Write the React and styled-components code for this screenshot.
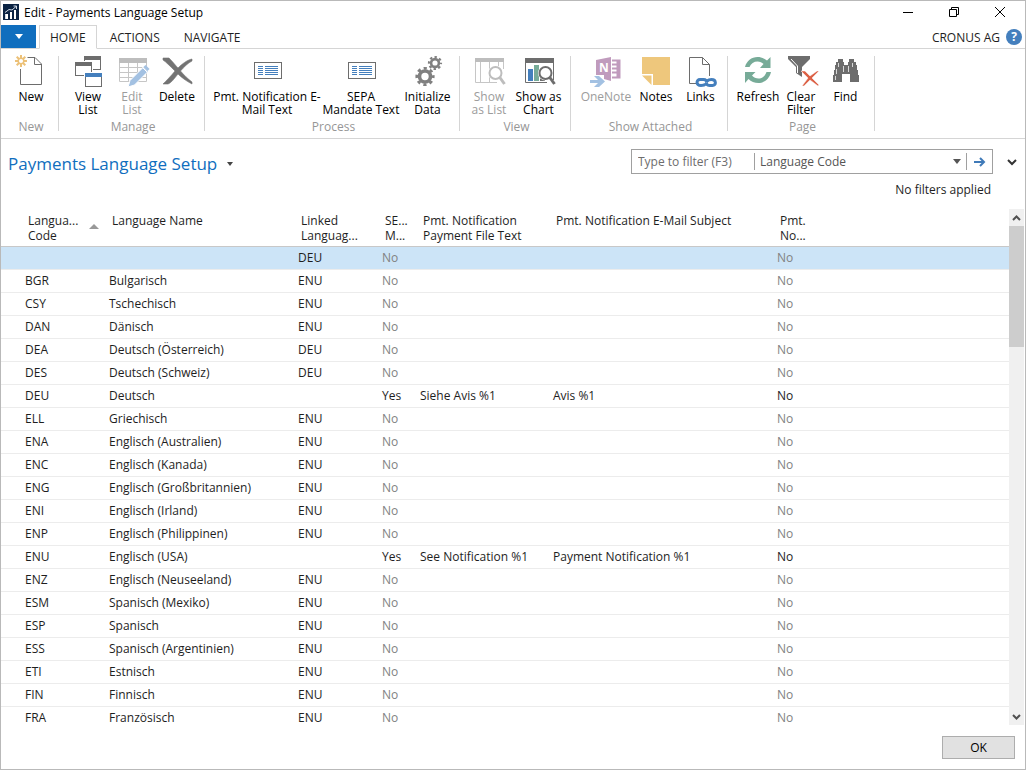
import { useState } from 'react';
import styled, { createGlobalStyle } from 'styled-components';

const columns = [
	{ key: 'code', lines: ['Langua...', 'Code'], width: 104, sorted: true },
	{ key: 'name', lines: ['Language Name'], width: 189 },
	{ key: 'linked', lines: ['Linked', 'Languag...'], width: 84 },
	{ key: 'sepa', lines: ['SE...', 'M...'], width: 38 },
	{
		key: 'fileText',
		lines: ['Pmt. Notification', 'Payment File Text'],
		width: 133,
	},
	{ key: 'subject', lines: ['Pmt. Notification E-Mail Subject'], width: 224 },
	{ key: 'pmt', lines: ['Pmt.', 'No...'] },
];

const languages = [
	{ code: '', name: '', linked: 'DEU' },
	{ code: 'BGR', name: 'Bulgarisch', linked: 'ENU' },
	{ code: 'CSY', name: 'Tschechisch', linked: 'ENU' },
	{ code: 'DAN', name: 'Dänisch', linked: 'ENU' },
	{ code: 'DEA', name: 'Deutsch (Österreich)', linked: 'DEU' },
	{ code: 'DES', name: 'Deutsch (Schweiz)', linked: 'DEU' },
	{
		code: 'DEU',
		name: 'Deutsch',
		linked: '',
		fileText: 'Siehe Avis %1',
		subject: 'Avis %1',
	},
	{ code: 'ELL', name: 'Griechisch', linked: 'ENU' },
	{ code: 'ENA', name: 'Englisch (Australien)', linked: 'ENU' },
	{ code: 'ENC', name: 'Englisch (Kanada)', linked: 'ENU' },
	{ code: 'ENG', name: 'Englisch (Großbritannien)', linked: 'ENU' },
	{ code: 'ENI', name: 'Englisch (Irland)', linked: 'ENU' },
	{ code: 'ENP', name: 'Englisch (Philippinen)', linked: 'ENU' },
	{
		code: 'ENU',
		name: 'Englisch (USA)',
		linked: '',
		fileText: 'See Notification %1',
		subject: 'Payment Notification %1',
	},
	{ code: 'ENZ', name: 'Englisch (Neuseeland)', linked: 'ENU' },
	{ code: 'ESM', name: 'Spanisch (Mexiko)', linked: 'ENU' },
	{ code: 'ESP', name: 'Spanisch', linked: 'ENU' },
	{ code: 'ESS', name: 'Spanisch (Argentinien)', linked: 'ENU' },
	{ code: 'ETI', name: 'Estnisch', linked: 'ENU' },
	{ code: 'FIN', name: 'Finnisch', linked: 'ENU' },
	{ code: 'FRA', name: 'Französisch', linked: 'ENU' },
];

const NewIcon = () => (
	<RibbonSvg>
		<path
			d='M12.500 2.500H20L26.500 9V29.500H5.500V14M19.500 2.500V9.500H26.500'
			fill='none'
			stroke='#6d6d6d'
		/>
		<g stroke='#ecc178' strokeWidth='2'>
			<path d='M6 0V3.500M6 8.500V12M0 6H3.500M8.500 6H12M1.700 1.700L4 4M8 8L10.300 10.300M10.300 1.700L8 4M4 8L1.700 10.300' />
			<circle cx='6' cy='6' r='2.800' fill='#fff' strokeWidth='1.500' />
		</g>
	</RibbonSvg>
);

const ViewListIcon = () => (
	<RibbonSvg>
		<path d='M12 1H29V15H21V14H28V5H13V6H12Z' fill='#6d6d6d' />
		<path d='M3 7H20V17H19V11H4V20H12V21H3Z' fill='#6d6d6d' />
		<path d='M13 18H30V32H13ZM14 22V31H29V22Z' fill='#6d6d6d' fillRule='evenodd' />
		<path d='M13 18H30V22H13Z' fill='#447fbd' />
	</RibbonSvg>
);

const EditListIcon = () => (
	<RibbonSvg>
		<path d='M3 3H31V8H3Z' fill='#bdbdbd' />
		<path
			d='M3.500 8V26.500H30.500V8M3 12.500H31M3 17.500H31M3 22.500H31M12.500 8V27M21.500 8V27'
			fill='none'
			stroke='#c6c6c6'
		/>
		<path
			d='M12 32L14 25.500L27.500 12L32 16.500L18.500 30Z'
			fill='#a3c1e2'
			stroke='#fff'
		/>
		<path d='M28.500 11L32.500 15' stroke='#a3c1e2' strokeWidth='3' />
		<path d='M26.500 12.500L31 17' stroke='#fff' />
	</RibbonSvg>
);

const DeleteIcon = () => (
	<RibbonSvg>
		<path
			d='M2 3H8C12 7 15 11 17 13C21 9 26 5 31 4V6C27 8 23 12 19.500 16C23 20 27 24 31 27V29C25 26 20 22 17 19C13 24 10 28 7 29H2C5 26 10 21 14 16C9 11 5 7 2 5Z'
			fill='#737373'
			stroke='#737373'
			strokeWidth='0.600'
		/>
	</RibbonSvg>
);

const CardIcon = () => (
	<RibbonSvg>
		<rect x='3.500' y='7.500' width='27' height='16' fill='#fff' stroke='#6d6d6d' />
		<path
			d='M7 11.500H12M7 13.500H12M7 15.500H12M7 17.500H12M7 19.500H12M14 11.500H27M14 13.500H27M14 15.500H27M14 17.500H27M14 19.500H27'
			stroke='#447fbd'
		/>
	</RibbonSvg>
);

const GearsIcon = () => (
	<RibbonSvg>
		<g fill='none' stroke='#808080'>
			<circle cx='23' cy='8' r='3.900' strokeWidth='2.600' />
			<circle
				cx='23'
				cy='8'
				r='6'
				strokeWidth='2.200'
				strokeDasharray='2.400 2.312'
				strokeDashoffset='1.200'
			/>
			<circle cx='13' cy='21.500' r='5.500' strokeWidth='3.600' />
			<circle
				cx='13'
				cy='21.500'
				r='8.200'
				strokeWidth='2.800'
				strokeDasharray='3.200 3.240'
				strokeDashoffset='1.600'
			/>
		</g>
	</RibbonSvg>
);

const ShowListIcon = () => (
	<RibbonSvg>
		<path d='M2 3H31V7H2Z' fill='#bdbdbd' />
		<path
			d='M2.500 7V27.500H24M30.500 7V14M7.500 7V27M16.500 7V27M25.500 7V12'
			fill='none'
			stroke='#c6c6c6'
		/>
		<Lens $color='#bdbdbd' />
	</RibbonSvg>
);

const ShowChartIcon = () => (
	<RibbonSvg>
		<path d='M2 3H31V8H2Z' fill='#6d6d6d' />
		<path d='M2.500 8V27.500H24M30.500 8V25' fill='none' stroke='#6d6d6d' />
		<path d='M5 14H10V26H5Z' fill='#447fbd' />
		<path d='M11 10H16V26H11Z' fill='#77ab98' />
		<path d='M17 22H22V26H17Z' fill='#6d6d6d' />
		<Lens $color='#6d6d6d' />
	</RibbonSvg>
);

const Lens = ({ $color }) => (
	<g>
		<circle cx='22.500' cy='18' r='7.500' fill='#fff' />
		<circle cx='22.500' cy='18' r='6' fill='#fff' stroke={$color} strokeWidth='2' />
		<path d='M26.500 22L31.500 29' stroke={$color} strokeWidth='3' />
	</g>
);

const OneNoteIcon = () => (
	<RibbonSvg>
		<path d='M6 5L21 2V26L14 24V20H6Z' fill='#c09bbd' />
		<path
			d='M22 5.500H29.500V22.500H22M22 9.500H27M22 13.500H27M22 17.500H27M27.500 5V23'
			fill='none'
			stroke='#c09bbd'
			strokeWidth='2'
		/>
		<text x='9' y='17' fontSize='12' fontWeight='700' fill='#fff'>
			N
		</text>
		<path d='M0 25H8L4 21H9L15 26.500L9 32H4L8 28H0Z' fill='#a3c1e2' />
	</RibbonSvg>
);

const NotesIcon = () => (
	<RibbonSvg>
		<path d='M2 2H30V30H13V19H2Z' fill='#eec77c' />
		<path d='M2 20.500H11.500V30Z' fill='#eec77c' />
	</RibbonSvg>
);

const LinksIcon = () => (
	<RibbonSvg>
		<path
			d='M11 28.500H4.500V2.500H17.500L24.500 9.500V21M17.500 2.500V9.500H24.500'
			fill='none'
			stroke='#6d6d6d'
		/>
		<g fill='none' stroke='#447fbd' strokeWidth='3'>
			<path d='M20.500 29C19.500 30.300 18 30.500 16 30.500C10.800 30.500 11 24.500 15 24.500H18.500C21 24.500 22 26 21.500 27.500' />
			<path d='M22 26C23.500 24.700 24.500 24.500 26.500 24.500C31.500 24.500 31.500 30.500 27.500 30.500H24.500C22 30.500 21 29 21.500 27.500' />
		</g>
	</RibbonSvg>
);

const RefreshIcon = () => (
	<RibbonSvg>
		<g fill='#77ab98'>
			<path d='M3 12C4.500 6 9.500 2 15.500 2C19.500 2 22.500 3.500 25 5.500L28.500 2V13H18L21.500 9C20 7.500 18 6.500 15.500 6.500C12 6.500 8.800 8.500 7.500 12Z' />
			<path d='M29 17C27.500 23.500 22.500 28 16.500 28C12.500 28 9 26.500 6.500 24L3 28V17H13.500L10 20.500C11.500 22.500 14 23.500 16.500 23.500C20 23.500 23.200 21 24.500 17Z' />
		</g>
	</RibbonSvg>
);

const ClearFilterIcon = () => (
	<RibbonSvg>
		<path d='M3 1H25V4L17 12V22L11 18V12L3 4Z' fill='#6d6d6d' />
		<path d='M6 4L12.500 11V18' fill='none' stroke='#fff' />
		<path
			d='M16 16H20L25 21L32 16H34L27 23L34 30L33 31L25 25L19 31H17L23 23Z'
			fill='#dc6146'
			stroke='#fff'
			strokeWidth='0.500'
		/>
	</RibbonSvg>
);

const FindIcon = () => (
	<RibbonSvg>
		<path
			d='M8 4H13V7H14V10H18V7H19V4H24V7H26V10H27V15H28V20H29V27H20V19H12V27H3V20H4V15H5V10H6V7H8Z'
			fill='#6d6d6d'
		/>
		<path
			d='M8.500 8V12M6.500 14V19M5.500 21V25M18.500 11V17M13.500 11V17M22.500 8V12'
			stroke='#d8d8d8'
		/>
	</RibbonSvg>
);

const groups = [
	{ title: 'New', items: [{ label: 'New', icon: NewIcon, width: 46 }] },
	{
		title: 'Manage',
		items: [
			{ label: 'View\nList', icon: ViewListIcon, width: 44 },
			{ label: 'Edit\nList', icon: EditListIcon, width: 44, disabled: true },
			{ label: 'Delete', icon: DeleteIcon, width: 46 },
		],
	},
	{
		title: 'Process',
		items: [
			{
				label: 'Pmt. Notification E-\nMail Text',
				icon: CardIcon,
				width: 110,
			},
			{ label: 'SEPA\nMandate Text', icon: CardIcon, width: 78 },
			{ label: 'Initialize\nData', icon: GearsIcon, width: 55 },
		],
	},
	{
		title: 'View',
		items: [
			{ label: 'Show\nas List', icon: ShowListIcon, width: 44, disabled: true },
			{ label: 'Show as\nChart', icon: ShowChartIcon, width: 55 },
		],
	},
	{
		title: 'Show Attached',
		items: [
			{ label: 'OneNote', icon: OneNoteIcon, width: 56, disabled: true },
			{ label: 'Notes', icon: NotesIcon, width: 44 },
			{ label: 'Links', icon: LinksIcon, width: 45 },
		],
	},
	{
		title: 'Page',
		items: [
			{ label: 'Refresh', icon: RefreshIcon, width: 46 },
			{ label: 'Clear\nFilter', icon: ClearFilterIcon, width: 40 },
			{ label: 'Find', icon: FindIcon, width: 49 },
		],
	},
];

const TitleBar = () => (
	<TitleBarWrapper>
		<svg width='16' height='16' viewBox='0 0 16 16' aria-hidden='true'>
			<rect width='16' height='16' fill='#0b2343' />
			<path d='M3 10H5V15H3ZM7 8H9V15H7ZM11 6H13V15H11Z' fill='#fff' />
			<path
				d='M2 8.500L6 5.500L9 6L13 2.500M10.500 2H13.500V5M2.500 15V10'
				fill='none'
				stroke='#cfd8e4'
			/>
		</svg>
		<h1>Edit - Payments Language Setup</h1>
		<WindowButton type='button' aria-label='Minimize'>
			<svg width='12' height='12'>
				<path d='M1 6.500H11' stroke='#000' />
			</svg>
		</WindowButton>
		<WindowButton type='button' aria-label='Restore'>
			<svg width='12' height='12'>
				<path
					d='M1.500 3.500H8.500V10.500H1.500ZM3.500 3V1.500H10.500V8.500H9'
					fill='none'
					stroke='#000'
				/>
			</svg>
		</WindowButton>
		<WindowButton type='button' aria-label='Close'>
			<svg width='12' height='12'>
				<path d='M1 1L11 11M11 1L1 11' stroke='#000' />
			</svg>
		</WindowButton>
	</TitleBarWrapper>
);

const Tabs = () => {
	const [active, setActive] = useState('HOME');

	return (
		<TabsWrapper>
			<MenuButton type='button' aria-label='Application menu'>
				<svg width='8' height='5'>
					<path d='M0 0H8L4 5Z' fill='#fff' />
				</svg>
			</MenuButton>
			{['HOME', 'ACTIONS', 'NAVIGATE'].map((el) => (
				<Tab
					key={el}
					type='button'
					$active={el === active}
					onClick={() => setActive(el)}
				>
					{el}
				</Tab>
			))}
			<Company>CRONUS AG</Company>
			<HelpButton type='button' aria-label='Help'>
				?
			</HelpButton>
		</TabsWrapper>
	);
};

const Ribbon = () => (
	<RibbonWrapper>
		{groups.map((group) => (
			<Group key={group.title}>
				<div className='items'>
					{group.items.map(({ label, icon: Icon, width, disabled }) => (
						<RibbonButton
							key={label}
							type='button'
							disabled={disabled}
							$width={width}
						>
							<Icon />
							<span>{label}</span>
						</RibbonButton>
					))}
				</div>
				<h2>{group.title}</h2>
			</Group>
		))}
	</RibbonWrapper>
);

const FilterBar = () => (
	<FilterWrapper>
		<PageTitle type='button'>
			Payments Language Setup
			<svg width='6' height='4'>
				<path d='M0 0H6L3 4Z' fill='#444' />
			</svg>
		</PageTitle>
		<div className='filter'>
			<FilterBox>
				<input
					type='text'
					placeholder='Type to filter (F3)'
					aria-label='Type to filter (F3)'
				/>
				<div className='field'>
					<select aria-label='Filter field'>
						<option>Language Code</option>
						<option>Language Name</option>
					</select>
					<svg width='8' height='5'>
						<path d='M0 0H8L4 5Z' fill='#555' />
					</svg>
				</div>
				<button type='button' aria-label='Apply filter'>
					<svg width='12' height='10'>
						<path
							d='M0 5H10M6 1L10 5L6 9'
							fill='none'
							stroke='#3f7ab8'
							strokeWidth='2'
						/>
					</svg>
				</button>
			</FilterBox>
			<p>No filters applied</p>
		</div>
		<ExpandButton type='button' aria-label='Expand filters'>
			<svg width='10' height='7'>
				<path
					d='M1 1L5 5L9 1'
					fill='none'
					stroke='#333'
					strokeWidth='2'
				/>
			</svg>
		</ExpandButton>
	</FilterWrapper>
);

const LanguageTable = () => {
	const [selected, setSelected] = useState(0);

	return (
		<TableArea>
			<div className='viewport'>
				<Table>
					<colgroup>
						{columns.map((el) => (
							<Col key={el.key} $width={el.width} />
						))}
					</colgroup>
					<thead>
						<tr>
							{columns.map((el) => (
								<th key={el.key} scope='col'>
									<HeaderCell>
										<span>{el.lines.join('\n')}</span>
										{el.sorted && (
											<svg width='10' height='5'>
												<path d='M5 0L10 5H0Z' fill='#999' />
											</svg>
										)}
									</HeaderCell>
								</th>
							))}
						</tr>
					</thead>
					<tbody>
						{languages.map((el, i) => (
							<Row
								key={el.code}
								$selected={i === selected}
								onClick={() => setSelected(i)}
							>
								<td>{el.code}</td>
								<td>{el.name}</td>
								<td>{el.linked}</td>
								<Flag $on={!!el.subject}>{el.subject ? 'Yes' : 'No'}</Flag>
								<td>{el.fileText}</td>
								<td>{el.subject}</td>
								<Flag $on={!!el.subject}>No</Flag>
							</Row>
						))}
					</tbody>
				</Table>
			</div>
			<Scrollbar>
				<button type='button' aria-label='Scroll up'>
					<svg width='9' height='6'>
						<path d='M1 5L4.500 1.500L8 5' />
					</svg>
				</button>
				<div className='thumb' />
				<button type='button' aria-label='Scroll down'>
					<svg width='9' height='6'>
						<path d='M1 1L4.500 4.500L8 1' />
					</svg>
				</button>
			</Scrollbar>
		</TableArea>
	);
};

const App = () => (
	<>
		<GlobalStyle />
		<Window>
			<TitleBar />
			<Tabs />
			<Ribbon />
			<FilterBar />
			<LanguageTable />
			<Footer>
				<button type='button'>OK</button>
			</Footer>
		</Window>
	</>
);

const GlobalStyle = createGlobalStyle`
	* {
		box-sizing: border-box;
	}

	body {
		margin: 0;
		background: #fff;
	}

	body, button, input, select {
		font-family: 'Open Sans', 'Noto Sans', sans-serif;
		font-size: 12px;
		color: #1e1e1e;
	}

	button {
		padding: 0;
		border: 0;
		background: none;
	}

	h1, h2, p {
		margin: 0;
		font-size: 12px;
		font-weight: 400;
	}
`;

const Window = styled.div`
	display: flex;
	flex-direction: column;
	height: 100vh;
	border: 1px solid #b9b9b9;
`;

const TitleBarWrapper = styled.header`
	display: flex;
	align-items: center;
	height: 24px;
	padding: 0 2px 2px;

	h1 {
		flex: 1;
		padding-left: 5px;
		color: #000;
	}
`;

const WindowButton = styled.button`
	display: flex;
	align-items: center;
	justify-content: center;
	width: 46px;
	height: 22px;
`;

const TabsWrapper = styled.nav`
	display: flex;
	height: 24px;
	padding-right: 3px;
	border-bottom: 1px solid #d5d5d5;
`;

const MenuButton = styled.button`
	display: flex;
	align-items: center;
	justify-content: center;
	width: 35px;
	height: 23px;
	margin-right: 3px;
	background: #106ebe;
`;

const Tab = styled.button`
	height: 24px;
	padding: 0 10px;
	margin-right: 2px;
	border: 1px solid ${({ $active }) => ($active ? '#d5d5d5' : 'transparent')};
	border-bottom-color: ${({ $active }) => ($active ? '#fff' : '#d5d5d5')};
	line-height: 24px;
`;

const Company = styled.span`
	margin-left: auto;
	padding-right: 6px;
	line-height: 26px;
`;

const HelpButton = styled.button`
	width: 16px;
	height: 16px;
	margin-top: 4px;
	border-radius: 50%;
	background: #447fbd;
	color: #fff;
	font-weight: 700;
	line-height: 16px;
`;

const RibbonWrapper = styled.section`
	display: flex;
	flex-shrink: 0;
	height: 90px;
	padding: 7px 0;
	border-bottom: 1px solid #d5d5d5;
`;

const Group = styled.div`
	display: flex;
	flex-direction: column;
	justify-content: space-between;
	padding: 0 4px 0 7px;
	border-right: 1px solid #d5d5d5;

	.items {
		display: flex;
		align-items: flex-start;
	}

	h2 {
		color: #969696;
		line-height: 8px;
		text-align: center;
	}
`;

const RibbonButton = styled.button`
	display: flex;
	flex-direction: column;
	align-items: center;
	gap: 3px;
	width: ${({ $width }) => $width}px;
	color: #000;
	line-height: 13px;
	white-space: pre;

	&:disabled {
		color: #9c9c9c;
	}
`;

const RibbonSvg = styled.svg.attrs({
	width: 32,
	height: 32,
	viewBox: '0 0 32 32',
	'aria-hidden': true,
})`
	flex-shrink: 0;
	margin-top: -1px;
	overflow: visible;
`;

const FilterWrapper = styled.section`
	display: flex;
	align-items: flex-start;
	flex-shrink: 0;
	height: 70px;
	padding: 10px 8px 0 7px;

	.filter {
		width: 362px;
		margin-left: auto;
	}

	p {
		padding: 7px 2px 0 0;
		line-height: 18px;
		text-align: right;
	}
`;

const PageTitle = styled.button`
	display: flex;
	align-items: center;
	gap: 10px;
	color: #106ebe;
	font-size: 17px;
	line-height: 30px;
`;

const FilterBox = styled.div`
	display: flex;
	align-items: center;
	height: 25px;
	border: 1px solid #a0a0a0;

	input,
	select {
		height: 17px;
		padding: 0 6px;
		border: 0;
		outline: 0;
		background: none;
		color: #555;
		appearance: none;
	}

	input {
		width: 122px;
	}

	input::placeholder {
		color: #6d6d6d;
	}

	.field {
		display: flex;
		flex: 1;
		align-items: center;
		padding-right: 5px;
		border: solid #a0a0a0;
		border-width: 0 1px;
	}

	select {
		flex: 1;
		padding: 0 5px;
	}

	button {
		display: flex;
		align-items: center;
		justify-content: center;
		width: 25px;
	}
`;

const ExpandButton = styled.button`
	height: 25px;
	margin-left: 14px;
`;

const TableArea = styled.main`
	display: flex;
	flex: 1;
	min-height: 0;
	padding-right: 1px;

	.viewport {
		flex: 1;
		overflow: hidden;
	}
`;

const Table = styled.table`
	width: 100%;
	table-layout: fixed;
	border-collapse: collapse;

	th,
	td {
		padding: 0 0 0 4px;
		text-align: left;
		font-weight: 400;
		white-space: nowrap;
	}

	th {
		height: 37px;
		padding: 4px 0 0 7px;
		border-bottom: 1px solid #c8c8c8;
		line-height: 15px;
		vertical-align: top;
	}

	th:first-child {
		padding-left: 27px;
	}

	td:first-child {
		padding-left: 24px;
	}
`;

const Col = styled.col`
	width: ${({ $width }) => ($width ? `${$width}px` : 'auto')};
`;

const HeaderCell = styled.div`
	display: flex;
	align-items: center;
	justify-content: space-between;
	padding-right: 6px;

	span {
		white-space: pre;
	}

	svg {
		margin-bottom: 4px;
	}
`;

const Row = styled.tr`
	height: 23px;
	border-bottom: 1px solid #ececec;
	background: ${({ $selected }) => ($selected ? '#cce4f7' : '#fff')};
	line-height: 22px;
`;

const Flag = styled.td`
	color: ${({ $on }) => ($on ? '#1e1e1e' : '#828282')};
`;

const Scrollbar = styled.div`
	display: flex;
	flex-direction: column;
	width: 15px;
	background: #f0f0f0;

	button {
		display: flex;
		align-items: center;
		justify-content: center;
		height: 17px;
	}

	path {
		fill: none;
		stroke: #505050;
		stroke-width: 2;
	}

	.thumb {
		height: 121px;
		margin-bottom: auto;
		background: #cdcdcd;
	}
`;

const Footer = styled.footer`
	display: flex;
	justify-content: flex-end;
	flex-shrink: 0;
	padding: 11px 10px 10px;

	button {
		width: 73px;
		height: 23px;
		border: 1px solid #adadad;
		background: #e1e1e1;
		color: #000;
	}
`;

export default App;
